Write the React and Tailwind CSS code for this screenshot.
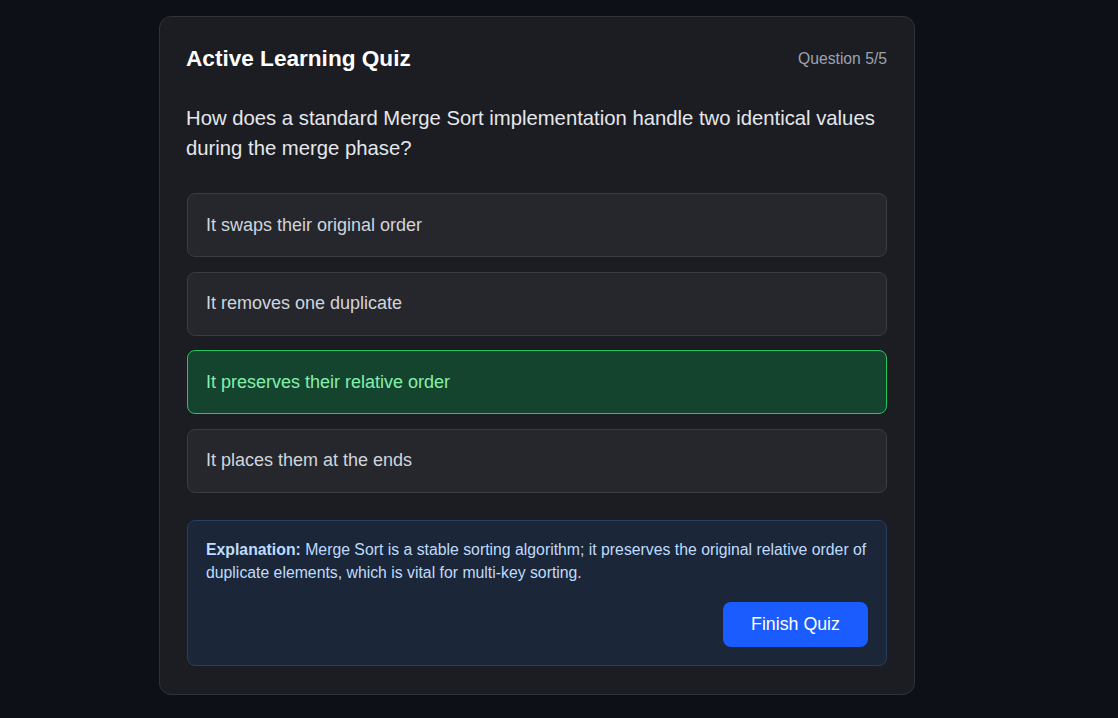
import React, { useState } from "react";

const options = [
  "It swaps their original order",
  "It removes one duplicate",
  "It preserves their relative order",
  "It places them at the ends",
];

const App = () => {
  const [selected] = useState(2);

  return (
    <div
      className="min-h-screen bg-[#0d1016] flex pl-[159px] pt-4 pb-6"
      style={{ fontFamily: '"Liberation Sans", Arial, sans-serif' }}
    >
      <div className="w-[756px] h-fit bg-[#1b1d23] border border-[#2f323a] rounded-xl px-[27px] pt-7 pb-7">
        <div className="flex items-center justify-between h-[28px]">
          <h1 className="text-[22.6px] font-bold text-white -ml-px">Active Learning Quiz</h1>
          <span className="text-[15.7px] text-[#9ca3af]">Question 5/5</span>
        </div>

        <p className="mt-[30px] text-[20.3px] leading-[30px] text-[#e5e7eb] -ml-px">
          How does a standard Merge Sort implementation handle two identical values during the merge phase?
        </p>

        <div className="mt-[30px] flex flex-col gap-[14.5px]">
          {options.map((opt, i) => (
            <div
              key={opt}
              className={`h-[64px] flex items-center px-[18px] rounded-lg border text-[18px] ${
                i === selected
                  ? "bg-[#14432e] border-[#22c55e] text-[#86efac]"
                  : "bg-[#25272d] border-[#393c44] text-[#d1d5db]"
              }`}
            >
              {opt}
            </div>
          ))}
        </div>

        <div className="mt-[27px] bg-[#1b2638] border border-[#2a3d5e] rounded-lg px-[18px] pt-[17px] pb-[18px]">
          <p className="text-[15.8px] leading-[23px] text-[#bfdbfe]">
            <span className="font-bold">Explanation:</span> Merge Sort is a stable sorting algorithm; it preserves the original relative order of duplicate elements, which is vital for multi-key sorting.
          </p>
          <div className="flex justify-end mt-[18px]">
            <button className="w-[145px] h-[45px] bg-[#1a5cff] text-white text-[17.8px] rounded-lg">
              Finish Quiz
            </button>
          </div>
        </div>
      </div>
    </div>
  );
};

export default App;
